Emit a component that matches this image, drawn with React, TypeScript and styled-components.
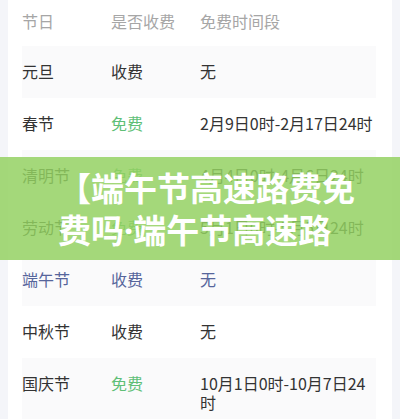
import React from "react";
import styled, { createGlobalStyle } from "styled-components";

const GlobalStyle = createGlobalStyle`
  html, body {
    margin: 0;
    padding: 0;
    background: #f4f5f9;
  }
  body {
    font-family: "Noto Sans CJK SC", "Noto Sans", sans-serif;
    color: #333;
  }
`;

type Fee = "paid" | "free";

interface Row {
  name: string;
  fee: Fee;
  period: string;
  active?: boolean;
}

const rows: Row[] = [
  { name: "元旦", fee: "paid", period: "无" },
  { name: "春节", fee: "free", period: "2月9日0时-2月17日24时" },
  { name: "清明节", fee: "free", period: "4月4日0时-4月6日24时" },
  { name: "劳动节", fee: "free", period: "5月1日0时-5月5日24时" },
  { name: "端午节", fee: "paid", period: "无", active: true },
  { name: "中秋节", fee: "paid", period: "无" },
  { name: "国庆节", fee: "free", period: "10月1日0时-10月7日24时" },
];

const Page = styled.div`
  position: relative;
  height: 419px;
  overflow: hidden;
`;

const Card = styled.div`
  margin: 0 8px;
  height: 100%;
  background: #fff;
  padding: 0 16px 0 14px;
`;

const Table = styled.div`
  display: flex;
  flex-direction: column;
`;

const Line = styled.div<{ $striped?: boolean; $head?: boolean }>`
  display: grid;
  grid-template-columns: 89px 89px 1fr;
  align-items: start;
  padding: ${(p) => (p.$head ? "12px 0 15px" : "16px 0 17px")};
  background: ${(p) => (p.$striped ? "#fafafb" : "transparent")};
`;

const Cell = styled.div<{ $tone?: "head" | "free" | "active" }>`
  font-size: 16px;
  line-height: 19px;
  color: ${(p) =>
    p.$tone === "head"
      ? "#a6a6a6"
      : p.$tone === "free"
      ? "#5fbf77"
      : p.$tone === "active"
      ? "#56659b"
      : "#333"};
`;

const Banner = styled.div`
  position: absolute;
  left: 0;
  right: 0;
  top: 157px;
  height: 103px;
  background: rgba(146, 208, 96, 0.84);
  display: flex;
  align-items: center;
  padding: 0 42px 0 58px;
  box-sizing: border-box;
`;

const Title = styled.h1`
  margin: 0;
  font-family: "Noto Sans CJK SC", sans-serif;
  font-weight: 700;
  font-size: 33px;
  line-height: 42px;
  color: #fff;
`;

const Dot = styled.span`
  font-family: "Noto Sans", sans-serif;
`;

export default function App() {
  return (
    <Page>
      <GlobalStyle />
      <Card>
        <Table>
          <Line $head>
            <Cell $tone="head">节日</Cell>
            <Cell $tone="head">是否收费</Cell>
            <Cell $tone="head">免费时间段</Cell>
          </Line>
          {rows.map((r, i) => {
            const tone = r.active ? "active" : undefined;
            return (
              <Line key={r.name} $striped={i % 2 === 0}>
                <Cell $tone={tone}>{r.name}</Cell>
                <Cell $tone={r.fee === "free" ? "free" : tone}>
                  {r.fee === "free" ? "免费" : "收费"}
                </Cell>
                <Cell $tone={tone}>{r.period}</Cell>
              </Line>
            );
          })}
        </Table>
      </Card>
      <Banner>
        <Title>
          【端午节高速路费免费吗<Dot>·</Dot>端午节高速路
        </Title>
      </Banner>
    </Page>
  );
}
